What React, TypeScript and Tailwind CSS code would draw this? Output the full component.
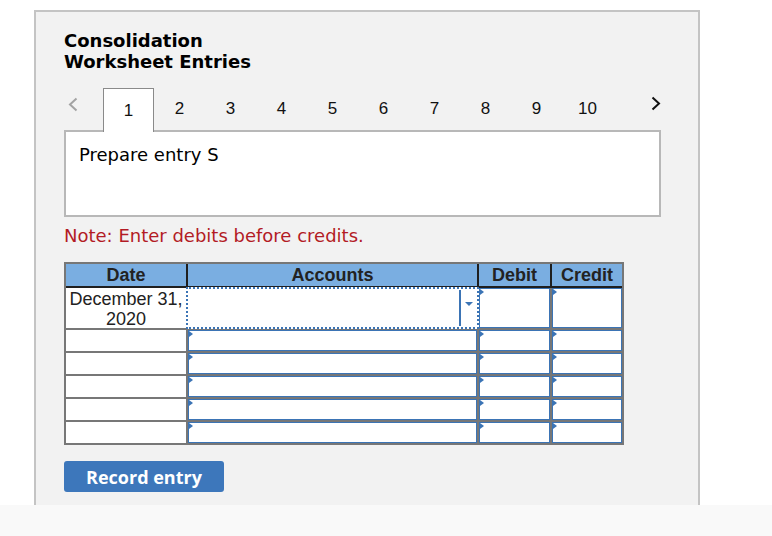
const tabs = [1, 2, 3, 4, 5, 6, 7, 8, 9, 10];
const verdana = "font-['DejaVu_Sans',Verdana,sans-serif]";

function Marker() {
  return (
    <span className="absolute left-0 top-0 w-0 h-0 border-y-[3px] border-y-transparent border-l-[4px] border-l-[#3b74b5]"></span>
  );
}

function InputCell({ width }: { width: string }) {
  return (
    <div className={`relative ${width} bg-white border-[1.5px] border-[#3b74b5]`}>
      <Marker />
    </div>
  );
}

function Chevron({ dir, color }: { dir: "left" | "right"; color: string }) {
  return (
    <svg width="10" height="15" viewBox="0 0 10 15" fill="none">
      <path
        d={dir === "left" ? "M8.5 1.5 L2 7.5 L8.5 13.5" : "M1.5 1.5 L8 7.5 L1.5 13.5"}
        stroke={color}
        strokeWidth="2"
      />
    </svg>
  );
}

export default function App() {
  const rows = [1, 2, 3, 4, 5, 6];

  return (
    <div className="w-[772px] h-[536px] bg-white flex flex-col overflow-hidden">
      <div className="ml-[34px] mt-[10px] w-[666px] h-[495px] border-2 border-b-0 border-[#c4c4c4] bg-[#f2f2f2] pl-[28px] pr-[37px] pt-[18px]">
        <h1 className={`${verdana} text-[18px] leading-[21px] font-bold text-black`}>
          Consolidation
          <br />
          Worksheet Entries
        </h1>

        {/* tabs */}
        <div className="mt-[16px] flex items-center h-[42px] font-['Liberation_Sans',Arial,sans-serif] text-[17px] text-[#111]">
          <span className="w-[39px] pl-[4px] -mt-[10px]">
            <Chevron dir="left" color="#a3a3a3" />
          </span>
          {tabs.map((t) => (
            <div
              key={t}
              className={`w-[51px] h-[42px] flex items-center justify-center ${
                t === 1 ? "bg-white border-[1.5px] border-b-0 border-[#8a8a8a] -mb-[2px] h-[44px] relative z-10" : ""
              }`}
            >
              {t}
            </div>
          ))}
          <span className="ml-auto -mt-[11px]">
            <Chevron dir="right" color="#111" />
          </span>
        </div>

        {/* prompt */}
        <div className={`${verdana} h-[87px] border-2 border-[#b8b8b8] bg-white px-[13px] pt-[12px] text-[18px] leading-[22px] text-black`}>
          Prepare entry S
        </div>

        <p className={`${verdana} mt-[8px] text-[18px] leading-[22px] text-[#b31b25]`}>
          Note: Enter debits before credits.
        </p>

        {/* journal table */}
        <div className="mt-[15px] w-[560px] border-2 border-[#777] font-['Liberation_Sans',Arial,sans-serif]">
          <div className="flex h-[24px] bg-[#7aaee1] border-b-2 border-[#1f1f1f] text-[18px] font-bold text-[#222] leading-[23px]">
            <div className="w-[122px] border-r-2 border-[#1f1f1f] text-center">Date</div>
            <div className="w-[291px] border-r-2 border-[#1f1f1f] text-center">Accounts</div>
            <div className="w-[73px] border-r-2 border-[#1f1f1f] text-center">Debit</div>
            <div className="w-[70px] text-center">Credit</div>
          </div>

          <div className="flex flex-col gap-[2px] bg-[#777]">
            {rows.map((r) =>
              r === 1 ? (
                <div key={r} className="flex gap-[2px] h-[40px]">
                  <div className="w-[120px] bg-white text-center text-[18px] leading-[20px] text-[#222] pt-[1px]">
                    December 31,
                    <br />
                    2020
                  </div>
                  {/* focused account select, dotted frame laps over the cell borders */}
                  <div className="relative z-10 w-[293px] -mx-[2px] -my-[1px] bg-white flex border-2 border-dotted border-[#3b74b5]">
                    <div className="flex-1"></div>
                    <div className="w-[17px] my-[1px] mr-[1px] border-l-2 border-[#3b74b5] flex justify-center pt-[12px]">
                      <span className="w-0 h-0 border-x-[4px] border-x-transparent border-t-[4px] border-t-[#3b74b5]"></span>
                    </div>
                  </div>
                  <InputCell width="w-[71px]" />
                  <InputCell width="w-[70px]" />
                </div>
              ) : (
                <div key={r} className="flex gap-[2px] h-[21px]">
                  <div className="w-[120px] bg-white"></div>
                  <InputCell width="w-[289px]" />
                  <InputCell width="w-[71px]" />
                  <InputCell width="w-[70px]" />
                </div>
              )
            )}
          </div>
        </div>

        <button className="mt-[16px] w-[160px] h-[31px] rounded-[3px] bg-[#3d77bb] text-white font-['Open_Sans',sans-serif] font-bold text-[18px] leading-none">
          Record entry
        </button>
      </div>
      <div className="flex-1 bg-[#f9f9f9]"></div>
    </div>
  );
}
